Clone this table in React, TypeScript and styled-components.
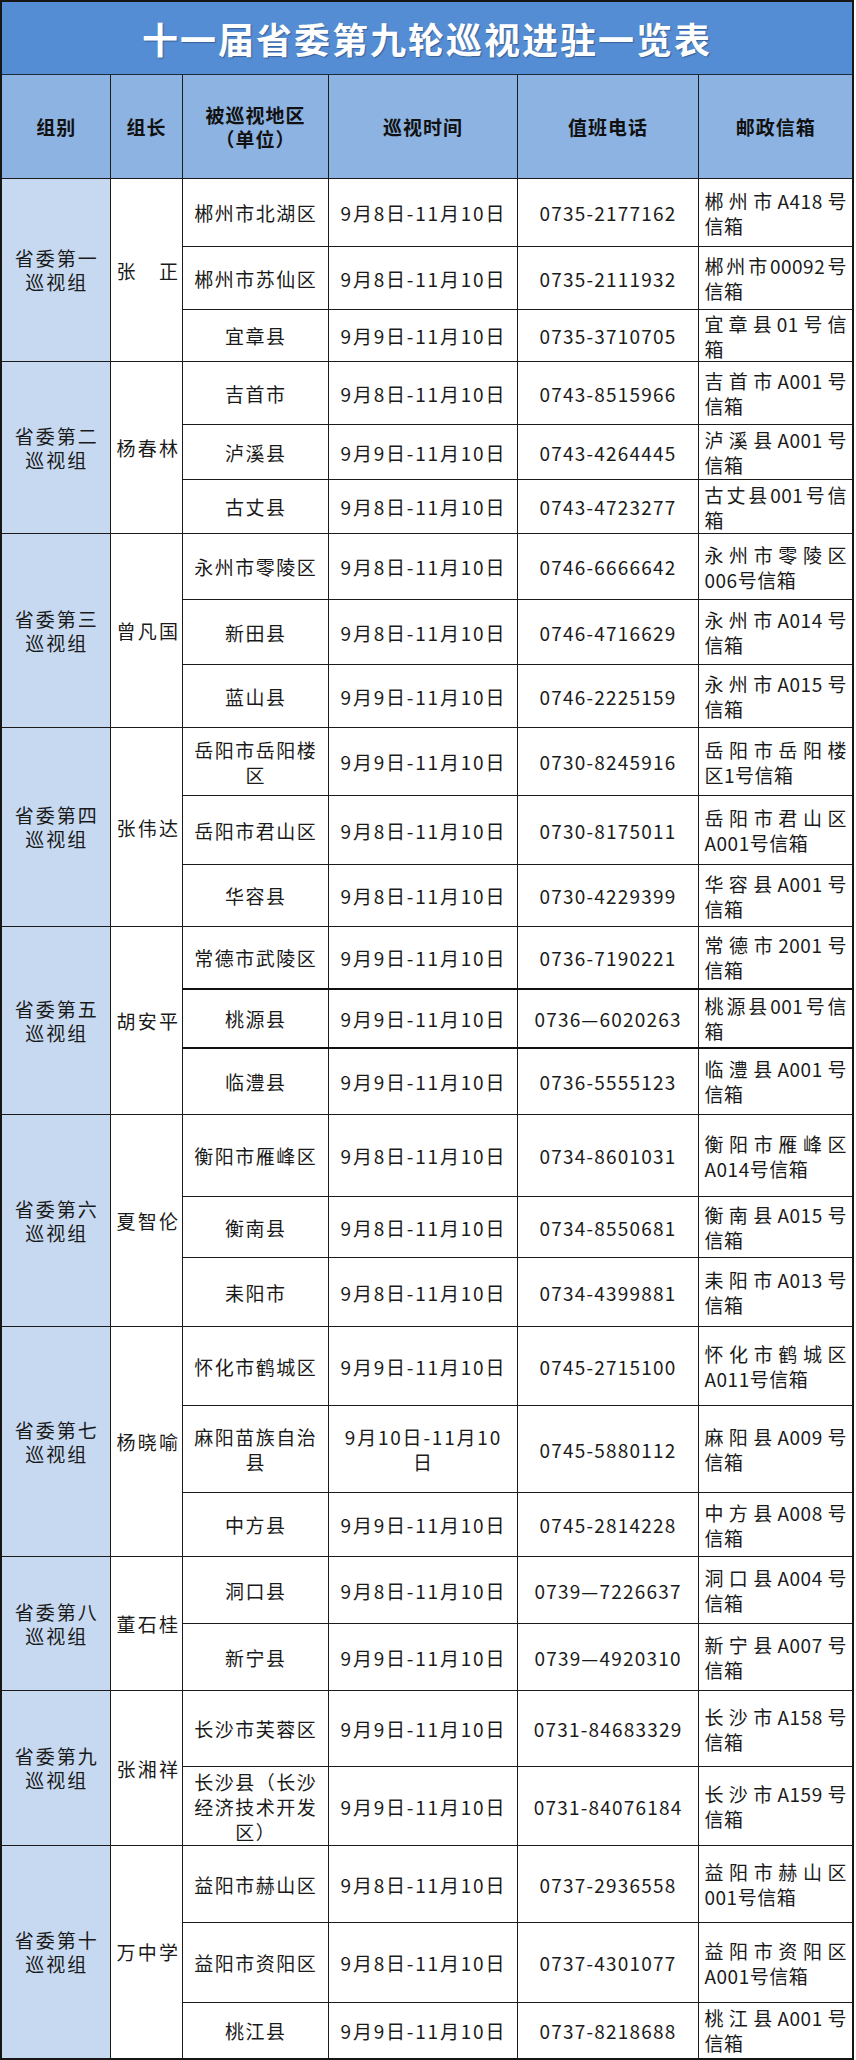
import React from "react";
import styled, { createGlobalStyle, css } from "styled-components";

interface Entry {
  region: string[];
  date: string[];
  phone: string;
  mail: string[];
  h: number;
  thick?: boolean;
}
interface Group {
  name: string[];
  leader: string;
  rows: Entry[];
}

const D8 = "9月8日-11月10日";
const D9 = "9月9日-11月10日";

const groups: Group[] = [
  {
    name: ["省委第一", "巡视组"],
    leader: "张 正",
    rows: [
      { region: ["郴州市北湖区"], date: [D8], phone: "0735-2177162", mail: ["郴州市A418号", "信箱"], h: 68 },
      { region: ["郴州市苏仙区"], date: [D8], phone: "0735-2111932", mail: ["郴州市00092号", "信箱"], h: 63 },
      { region: ["宜章县"], date: [D9], phone: "0735-3710705", mail: ["宜章县01号信", "箱"], h: 52 },
    ],
  },
  {
    name: ["省委第二", "巡视组"],
    leader: "杨春林",
    rows: [
      { region: ["吉首市"], date: [D8], phone: "0743-8515966", mail: ["吉首市A001号", "信箱"], h: 63 },
      { region: ["泸溪县"], date: [D9], phone: "0743-4264445", mail: ["泸溪县A001号", "信箱"], h: 55 },
      { region: ["古丈县"], date: [D8], phone: "0743-4723277", mail: ["古丈县001号信", "箱"], h: 54 },
    ],
  },
  {
    name: ["省委第三", "巡视组"],
    leader: "曾凡国",
    rows: [
      { region: ["永州市零陵区"], date: [D8], phone: "0746-6666642", mail: ["永州市零陵区", "006号信箱"], h: 66 },
      { region: ["新田县"], date: [D8], phone: "0746-4716629", mail: ["永州市A014号", "信箱"], h: 65 },
      { region: ["蓝山县"], date: [D9], phone: "0746-2225159", mail: ["永州市A015号", "信箱"], h: 63 },
    ],
  },
  {
    name: ["省委第四", "巡视组"],
    leader: "张伟达",
    rows: [
      { region: ["岳阳市岳阳楼", "区"], date: [D9], phone: "0730-8245916", mail: ["岳阳市岳阳楼", "区1号信箱"], h: 68 },
      { region: ["岳阳市君山区"], date: [D8], phone: "0730-8175011", mail: ["岳阳市君山区", "A001号信箱"], h: 69 },
      { region: ["华容县"], date: [D8], phone: "0730-4229399", mail: ["华容县A001号", "信箱"], h: 62 },
    ],
  },
  {
    name: ["省委第五", "巡视组"],
    leader: "胡安平",
    rows: [
      { region: ["常德市武陵区"], date: [D9], phone: "0736-7190221", mail: ["常德市2001号", "信箱"], h: 62 },
      { region: ["桃源县"], date: [D9], phone: "0736—6020263", mail: ["桃源县001号信", "箱"], h: 59, thick: true },
      { region: ["临澧县"], date: [D9], phone: "0736-5555123", mail: ["临澧县A001号", "信箱"], h: 67 },
    ],
  },
  {
    name: ["省委第六", "巡视组"],
    leader: "夏智伦",
    rows: [
      { region: ["衡阳市雁峰区"], date: [D8], phone: "0734-8601031", mail: ["衡阳市雁峰区", "A014号信箱"], h: 82 },
      { region: ["衡南县"], date: [D8], phone: "0734-8550681", mail: ["衡南县A015号", "信箱"], h: 61 },
      { region: ["耒阳市"], date: [D8], phone: "0734-4399881", mail: ["耒阳市A013号", "信箱"], h: 69 },
    ],
  },
  {
    name: ["省委第七", "巡视组"],
    leader: "杨晓喻",
    rows: [
      { region: ["怀化市鹤城区"], date: [D9], phone: "0745-2715100", mail: ["怀化市鹤城区", "A011号信箱"], h: 79 },
      { region: ["麻阳苗族自治", "县"], date: ["9月10日-11月10", "日"], phone: "0745-5880112", mail: ["麻阳县A009号", "信箱"], h: 87 },
      { region: ["中方县"], date: [D9], phone: "0745-2814228", mail: ["中方县A008号", "信箱"], h: 64 },
    ],
  },
  {
    name: ["省委第八", "巡视组"],
    leader: "董石桂",
    rows: [
      { region: ["洞口县"], date: [D8], phone: "0739—7226637", mail: ["洞口县A004号", "信箱"], h: 67 },
      { region: ["新宁县"], date: [D9], phone: "0739—4920310", mail: ["新宁县A007号", "信箱"], h: 67 },
    ],
  },
  {
    name: ["省委第九", "巡视组"],
    leader: "张湘祥",
    rows: [
      { region: ["长沙市芙蓉区"], date: [D9], phone: "0731-84683329", mail: ["长沙市A158号", "信箱"], h: 76 },
      { region: ["长沙县（长沙", "经济技术开发", "区）"], date: [D9], phone: "0731-84076184", mail: ["长沙市A159号", "信箱"], h: 79 },
    ],
  },
  {
    name: ["省委第十", "巡视组"],
    leader: "万中学",
    rows: [
      { region: ["益阳市赫山区"], date: [D8], phone: "0737-2936558", mail: ["益阳市赫山区", "001号信箱"], h: 77 },
      { region: ["益阳市资阳区"], date: [D8], phone: "0737-4301077", mail: ["益阳市资阳区", "A001号信箱"], h: 80 },
      { region: ["桃江县"], date: [D9], phone: "0737-8218688", mail: ["桃江县A001号", "信箱"], h: 56 },
    ],
  },
];

const GlobalStyle = createGlobalStyle`
  html, body {
    margin: 0;
    padding: 0;
    background: #ffffff;
  }
  body {
    font-family: "Noto Sans CJK SC", "Noto Sans", sans-serif;
    color: #1a1a1a;
  }
`;

const Sheet = styled.table`
  width: 852px;
  border-collapse: collapse;
  table-layout: fixed;
  border: 2px solid #161616;
`;

const Row = styled.tr<{ $h: number; $thick?: boolean }>`
  height: ${(p) => p.$h}px;
  ${(p) =>
    p.$thick &&
    css`
      td {
        border-top: 2px solid #111;
        border-bottom: 2px solid #111;
      }
    `}
`;

const TitleCell = styled.th`
  height: 72px;
  padding: 0;
  background: #548dd4;
  border: 1px solid #1b2b3b;
  color: #ffffff;
  font-size: 36px;
  font-weight: 700;
  letter-spacing: 2px;
  text-align: center;
  vertical-align: middle;
  text-shadow: 1px 1px 1px rgba(20, 40, 80, 0.45);
`;

const HeadCell = styled.th`
  padding: 0 0 0 1px;
  background: #8db3e2;
  border: 1px solid #1b1b1b;
  color: #111;
  font-size: 19px;
  font-weight: 700;
  line-height: 24px;
  letter-spacing: 1px;
  text-align: center;
  vertical-align: middle;
`;

const Cell = styled.td`
  border: 1px solid #1b1b1b;
  padding: 0 6px;
  vertical-align: middle;
  font-size: 19px;
  line-height: 25px;
  color: #1a1a1a;
  letter-spacing: 1.5px;
`;

const GroupCell = styled(Cell)`
  background: #c6d9f1;
  text-align: center;
  letter-spacing: 2px;
  padding: 0 0 0 2px;
  line-height: 24px;
`;

const LeaderCell = styled(Cell)`
  padding: 0 2px 0 6px;
  white-space: nowrap;
  text-align: justify;
  text-align-last: justify;
`;

const CenterCell = styled(Cell)<{ $ls: number }>`
  text-align: center;
  letter-spacing: ${(p) => p.$ls}px;
  padding: 0 0 0 ${(p) => p.$ls}px;
  white-space: nowrap;
`;

const MailCell = styled(Cell)`
  padding: 0 5px 0 6px;
  text-align: left;
  letter-spacing: 0.5px;
`;

const Line = styled.span<{ $spread?: boolean }>`
  display: block;
  white-space: nowrap;
  ${(p) => p.$spread && "text-align-last: justify;"}
`;

function Lines({ items, spread }: { items: string[]; spread?: boolean }) {
  return (
    <>
      {items.map((t, i) => (
        <Line key={i} $spread={spread && i < items.length - 1}>
          {t}
        </Line>
      ))}
    </>
  );
}

export default function App() {
  return (
    <>
      <GlobalStyle />
      <Sheet>
        <colgroup>
          <col style={{ width: 109 }} />
          <col style={{ width: 72 }} />
          <col style={{ width: 146 }} />
          <col style={{ width: 189 }} />
          <col style={{ width: 181 }} />
          <col style={{ width: 155 }} />
        </colgroup>
        <thead>
          <tr>
            <TitleCell colSpan={6}>十一届省委第九轮巡视进驻一览表</TitleCell>
          </tr>
          <Row $h={104}>
            <HeadCell>组别</HeadCell>
            <HeadCell>组长</HeadCell>
            <HeadCell>
              被巡视地区
              <br />（单位）
            </HeadCell>
            <HeadCell>巡视时间</HeadCell>
            <HeadCell>值班电话</HeadCell>
            <HeadCell>邮政信箱</HeadCell>
          </Row>
        </thead>
        <tbody>
          {groups.map((g) =>
            g.rows.map((r, i) => (
              <Row key={g.name[0] + i} $h={r.h} $thick={r.thick}>
                {i === 0 && (
                  <>
                    <GroupCell rowSpan={g.rows.length}>
                      <Lines items={g.name} />
                    </GroupCell>
                    <LeaderCell rowSpan={g.rows.length}>{g.leader}</LeaderCell>
                  </>
                )}
                <CenterCell $ls={1.5}>
                  {r.region.map((t, k) => (
                    <div key={k}>{t}</div>
                  ))}
                </CenterCell>
                <CenterCell $ls={1.8}>
                  {r.date.map((t, k) => (
                    <div key={k}>{t}</div>
                  ))}
                </CenterCell>
                <CenterCell $ls={1.2}>{r.phone}</CenterCell>
                <MailCell>
                  <Lines items={r.mail} spread />
                </MailCell>
              </Row>
            ))
          )}
        </tbody>
      </Sheet>
    </>
  );
}
